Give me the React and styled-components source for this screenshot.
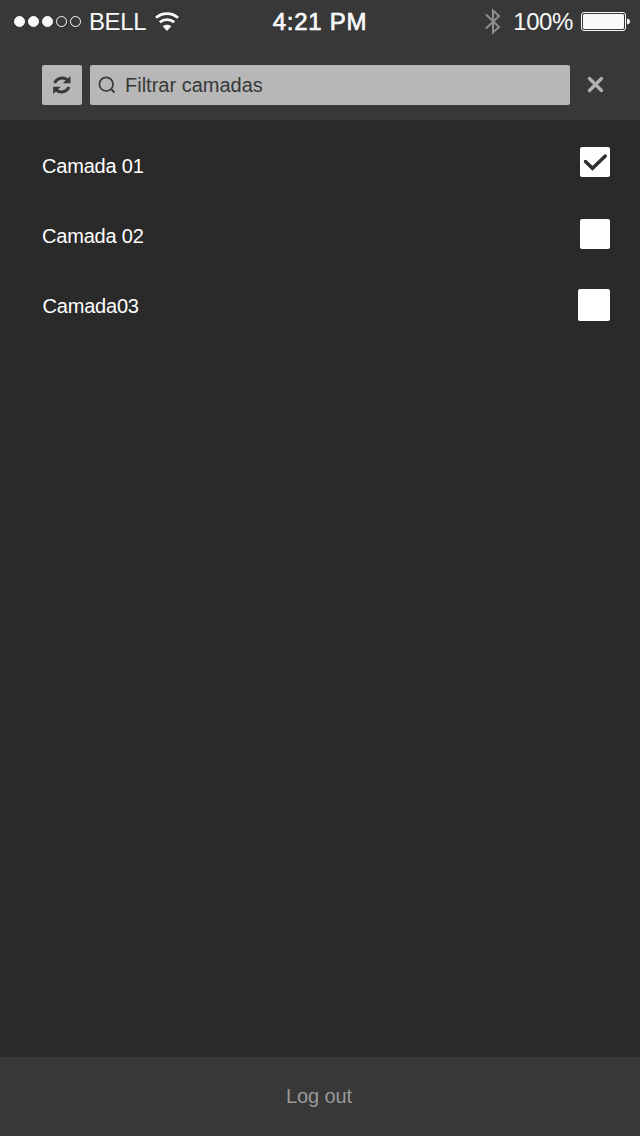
import React, { useState } from "react";
import styled, { createGlobalStyle } from "styled-components";

const GlobalStyle = createGlobalStyle`
  * { box-sizing: border-box; }
  body {
    margin: 0;
    background: #2a2a2a;
    font-family: "Liberation Sans", Arial, Helvetica, sans-serif;
  }
`;

const Screen = styled.div`
  display: flex;
  flex-direction: column;
  width: 640px;
  height: 1136px;
  background: #2a2a2a;
  overflow: hidden;
`;

const Header = styled.header`
  height: 120px;
  background: #383838;
`;

const StatusBar = styled.div`
  display: grid;
  grid-template-columns: 1fr auto 1fr;
  align-items: center;
  height: 43px;
  padding: 0 10px 0 14px;
  color: #fafafa;
  font-size: 24px;
  line-height: 43px;
`;

const StatusGroup = styled.div`
  display: flex;
  align-items: center;
  justify-content: ${(p) => (p.$end ? "flex-end" : "flex-start")};
  height: 43px;
`;

const StatusText = styled.span`
  white-space: pre;
  letter-spacing: ${(p) => p.$tracking || 0}px;
  margin: ${(p) => p.$margin || 0};
`;

const Clock = styled.span`
  white-space: pre;
  letter-spacing: 0.75px;
  margin-right: 4px;
  -webkit-text-stroke: 0.7px #fafafa;
`;

const Signal = styled.div`
  display: flex;
  gap: 3px;
  margin-right: 8px;
`;

const Dot = styled.i`
  width: 11px;
  height: 11px;
  border-radius: 50%;
  border: 1px solid #fafafa;
  background: ${(p) => (p.$on ? "#fafafa" : "transparent")};
`;

const Toolbar = styled.div`
  display: flex;
  align-items: center;
  height: 40px;
  margin-top: 22px;
  padding-left: 42px;
`;

const RefreshButton = styled.button`
  display: flex;
  align-items: center;
  justify-content: center;
  width: 40px;
  height: 40px;
  margin: 0 8px 0 0;
  padding: 0;
  border: 0;
  border-radius: 2px;
  background: #b7b7b7;
`;

const SearchField = styled.label`
  display: flex;
  align-items: center;
  width: 480px;
  height: 40px;
  padding-left: 8px;
  border-radius: 2px;
  background: #b7b7b7;
`;

const SearchInput = styled.input`
  flex: 1;
  height: 40px;
  margin-left: 9px;
  padding: 0;
  border: 0;
  outline: 0;
  background: transparent;
  color: #383838;
  font: 20px "Liberation Sans", Arial, sans-serif;
  &::placeholder {
    color: #383838;
    opacity: 1;
  }
`;

const CloseButton = styled.button`
  display: flex;
  margin: 0 0 0 17px;
  padding: 0;
  border: 0;
  background: transparent;
`;

const LayerList = styled.main`
  flex: 1;
  padding: 11px 30px 0 42px;
`;

const LayerRow = styled.div`
  display: flex;
  justify-content: space-between;
  height: 70px;
`;

const LayerName = styled.span`
  color: #fff;
  font-size: 20px;
  line-height: 70px;
  letter-spacing: -0.2px;
  padding-left: ${(p) => p.$indent || 0}px;
`;

const Checkbox = styled.button`
  width: ${(p) => p.$size}px;
  height: ${(p) => p.$size}px;
  margin: ${(p) => p.$drop}px 0 0;
  padding: 0;
  border: 0;
  border-radius: 2px;
  background: #fff;
  svg { display: block; }
`;

const Footer = styled.footer`
  display: flex;
  align-items: center;
  justify-content: center;
  height: 79px;
  padding-right: 2px;
  background: #383838;
`;

const LogoutButton = styled.button`
  padding: 0;
  border: 0;
  background: transparent;
  color: #999;
  font: 20px "Liberation Sans", Arial, sans-serif;
  letter-spacing: -0.1px;
`;

const WifiIcon = () => (
  <svg width="24" height="20" viewBox="0 0 24 20" fill="none" stroke="#fafafa" strokeWidth="2.7">
    <path d="M1 5.800C7.200.300 16.800.300 23 5.800" />
    <path d="M4.800 10.300c4.200-3.600 10.200-3.600 14.400 0" />
    <path d="M12 19l-4.300-4.700c2.500-2 6.100-2 8.600 0z" fill="#fafafa" stroke="none" />
  </svg>
);

const BluetoothIcon = () => (
  <svg width="16" height="27" viewBox="0 0 16 27" fill="none" stroke="#8e8e8e" strokeWidth="2">
    <path d="M1 6.500L14 19 8 24.500V2.500L14 8 1 20.500" />
  </svg>
);

const BatteryIcon = () => (
  <svg width="49" height="20" viewBox="0 0 49 20">
    <rect x=".5" y=".5" width="44" height="18" rx="2.500" fill="none" stroke="#fafafa" />
    <rect x="2" y="2" width="41" height="15" rx="1.500" fill="#fafafa" />
    <path d="M46 6.500c4 .5 4 5.500 0 6z" fill="#fafafa" />
  </svg>
);

const RefreshIcon = () => (
  <svg width="20" height="18" viewBox="0 0 20 18" fill="none" stroke="#383838" strokeWidth="3">
    <path d="M2.600 7C5 1.500 11.500.8 15.500 4" />
    <path d="M18.500 0v7.200h-7.700z" fill="#383838" stroke="none" />
    <path d="M17 11c-2.400 5.500-8.900 6.200-12.900 3" />
    <path d="M1.100 18v-7.200h7.700z" fill="#383838" stroke="none" />
  </svg>
);

const SearchIcon = () => (
  <svg width="18" height="18" viewBox="0 0 18 18" fill="none" stroke="#383838" strokeWidth="1.700">
    <circle cx="8.200" cy="8.200" r="6.800" />
    <path d="M12.800 12.800l3.700 3.700" strokeWidth="2" />
  </svg>
);

const CloseIcon = () => (
  <svg width="17" height="18" viewBox="0 0 17 18" stroke="#b0b0b0" strokeWidth="3.400" strokeLinecap="round">
    <path d="M2.500 2.500l12 12M14.500 2.500l-12 12" />
  </svg>
);

const CheckIcon = () => (
  <svg width="30" height="30" viewBox="0 0 30 30" fill="none" stroke="#2f2f2f" strokeWidth="3.400" strokeLinecap="round">
    <path d="M5.500 14.500l7 6.800L25.300 9" />
  </svg>
);

const layers = [
  { name: "Camada 01", size: 30, drop: 16 },
  { name: "Camada 02", size: 30, drop: 18 },
  { name: "Camada03", size: 32, drop: 18, indent: 0.5 },
];

export default function App() {
  const [checked, setChecked] = useState([true, false, false]);
  const toggle = (index) => setChecked((prev) => prev.map((v, i) => (i === index ? !v : v)));

  return (
    <>
      <GlobalStyle />
      <Screen>
        <Header>
          <StatusBar>
            <StatusGroup>
              <Signal>
                {[1, 1, 1, 0, 0].map((on, i) => <Dot key={i} $on={on} />)}
              </Signal>
              <StatusText $tracking={-0.4} $margin="0 9px 0 0">BELL</StatusText>
              <WifiIcon />
            </StatusGroup>
            <Clock>4:21 PM</Clock>
            <StatusGroup $end>
              <BluetoothIcon />
              <StatusText $tracking={-0.4} $margin="0 8px 0 12px">100%</StatusText>
              <BatteryIcon />
            </StatusGroup>
          </StatusBar>
          <Toolbar>
            <RefreshButton aria-label="Atualizar"><RefreshIcon /></RefreshButton>
            <SearchField>
              <SearchIcon />
              <SearchInput placeholder="Filtrar camadas" />
            </SearchField>
            <CloseButton aria-label="Fechar"><CloseIcon /></CloseButton>
          </Toolbar>
        </Header>
        <LayerList>
          {layers.map((layer, i) => (
            <LayerRow key={layer.name}>
              <LayerName $indent={layer.indent}>{layer.name}</LayerName>
              <Checkbox
                role="checkbox"
                aria-checked={checked[i]}
                aria-label={layer.name}
                $size={layer.size}
                $drop={layer.drop}
                onClick={() => toggle(i)}
              >
                {checked[i] && <CheckIcon />}
              </Checkbox>
            </LayerRow>
          ))}
        </LayerList>
        <Footer><LogoutButton>Log out</LogoutButton></Footer>
      </Screen>
    </>
  );
}
